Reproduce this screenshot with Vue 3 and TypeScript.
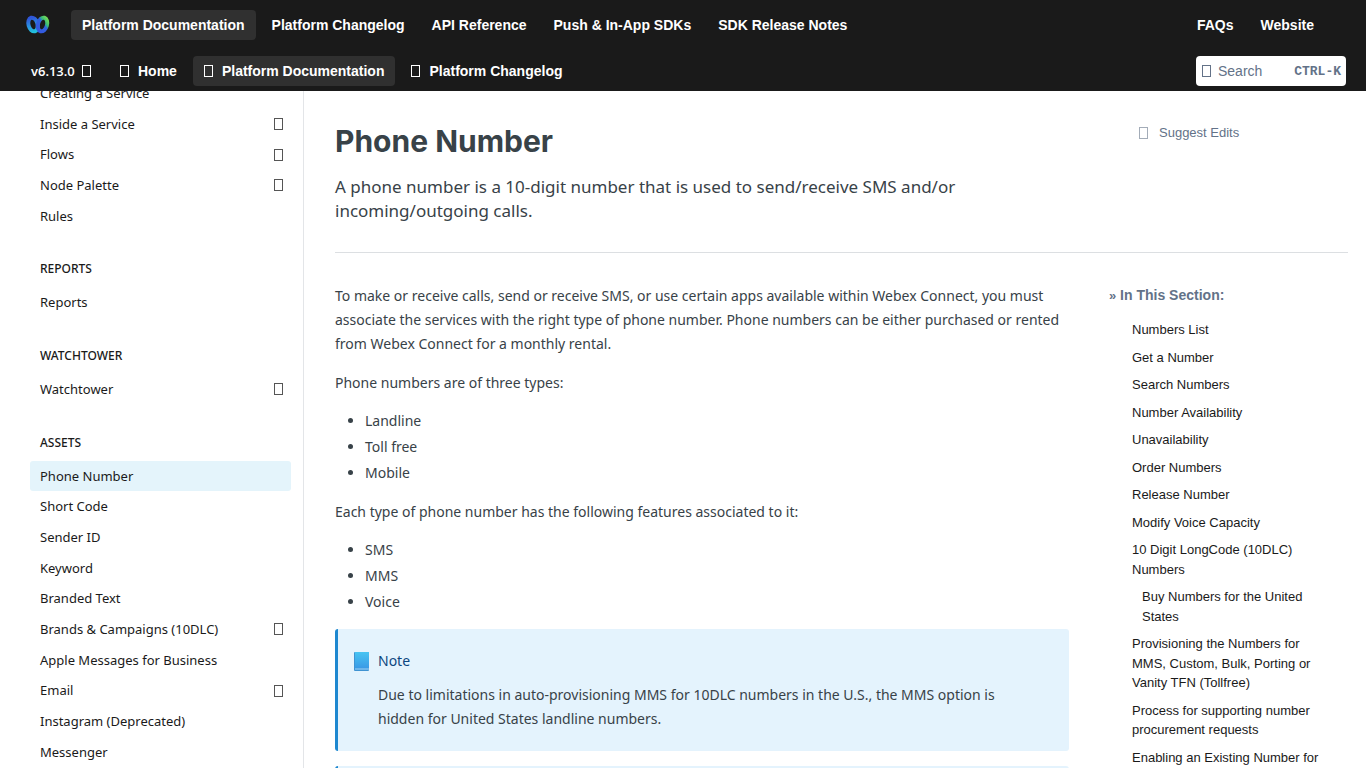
<script setup lang="ts">
interface NavItem { label: string; active?: boolean }
interface SideItem { label: string; expandable?: boolean; active?: boolean }
interface SideGroup { title?: string; items: SideItem[] }
interface TocItem { label: string; nested?: boolean }

const primaryNav: NavItem[] = [
  { label: 'Platform Documentation', active: true },
  { label: 'Platform Changelog' },
  { label: 'API Reference' },
  { label: 'Push & In-App SDKs' },
  { label: 'SDK Release Notes' },
]
const externalNav: NavItem[] = [{ label: 'FAQs' }, { label: 'Website' }]
const secondaryNav: NavItem[] = [
  { label: 'Home' },
  { label: 'Platform Documentation', active: true },
  { label: 'Platform Changelog' },
]

const groups: SideGroup[] = [
  {
    items: [
      { label: 'Creating a Service' },
      { label: 'Inside a Service', expandable: true },
      { label: 'Flows', expandable: true },
      { label: 'Node Palette', expandable: true },
      { label: 'Rules' },
    ],
  },
  { title: 'REPORTS', items: [{ label: 'Reports' }] },
  { title: 'WATCHTOWER', items: [{ label: 'Watchtower', expandable: true }] },
  {
    title: 'ASSETS',
    items: [
      { label: 'Phone Number', active: true },
      { label: 'Short Code' },
      { label: 'Sender ID' },
      { label: 'Keyword' },
      { label: 'Branded Text' },
      { label: 'Brands & Campaigns (10DLC)', expandable: true },
      { label: 'Apple Messages for Business' },
      { label: 'Email', expandable: true },
      { label: 'Instagram (Deprecated)' },
      { label: 'Messenger' },
    ],
  },
]

const toc: TocItem[] = [
  { label: 'Numbers List' },
  { label: 'Get a Number' },
  { label: 'Search Numbers' },
  { label: 'Number Availability' },
  { label: 'Unavailability' },
  { label: 'Order Numbers' },
  { label: 'Release Number' },
  { label: 'Modify Voice Capacity' },
  { label: '10 Digit LongCode (10DLC) Numbers' },
  { label: 'Buy Numbers for the United States', nested: true },
  { label: 'Provisioning the Numbers for MMS, Custom, Bulk, Porting or Vanity TFN (Tollfree)' },
  { label: 'Process for supporting number procurement requests' },
  { label: 'Enabling an Existing Number for' },
]

const types: string[] = ['Landline', 'Toll free', 'Mobile']
const features: string[] = ['SMS', 'MMS', 'Voice']
</script>

<template>
  <div class="page">
    <header class="header">
      <div class="bar bar-top">
        <a href="#" class="logo" aria-label="Webex Connect">
          <svg width="26" height="20" viewBox="0 0 26 20" fill="none" stroke-width="4">
            <defs>
              <linearGradient id="loopLeft" x1="0.3" y1="0" x2="0.3" y2="1">
                <stop offset="0" stop-color="#2f55d8" />
                <stop offset="0.5" stop-color="#2b8be0" />
                <stop offset="1" stop-color="#22bfdc" />
              </linearGradient>
              <linearGradient id="loopRight" x1="0.8" y1="0" x2="0.3" y2="1">
                <stop offset="0" stop-color="#6fd85a" />
                <stop offset="0.3" stop-color="#35b77c" />
                <stop offset="0.45" stop-color="#2f62e0" />
                <stop offset="1" stop-color="#3558e0" />
              </linearGradient>
            </defs>
            <ellipse cx="8" cy="9.500" rx="4.500" ry="7" transform="rotate(-16 8 9.5)" stroke="url(#loopLeft)" />
            <ellipse cx="17.500" cy="9.500" rx="4.500" ry="7" transform="rotate(16 17.5 9.5)" stroke="url(#loopRight)" />
          </svg>
        </a>
        <nav class="nav">
          <a v-for="n in primaryNav" :key="n.label" href="#" class="nav-link" :class="{ active: n.active }">{{ n.label }}</a>
        </nav>
        <nav class="nav nav-right">
          <a v-for="n in externalNav" :key="n.label" href="#" class="nav-link">{{ n.label }}</a>
        </nav>
      </div>
      <div class="bar bar-sub">
        <button type="button" class="version">v6.13.0 <i class="glyph"></i></button>
        <nav class="nav">
          <a v-for="n in secondaryNav" :key="n.label" href="#" class="nav-link with-glyph" :class="{ active: n.active }"><i class="glyph"></i>{{ n.label }}</a>
        </nav>
        <button type="button" class="search">
          <i class="glyph"></i><span>Search</span><kbd>CTRL-K</kbd>
        </button>
      </div>
    </header>

    <div class="body">
      <aside class="sidebar">
        <section v-for="(g, i) in groups" :key="i" class="group">
          <h2 v-if="g.title">{{ g.title }}</h2>
          <ul>
            <li v-for="s in g.items" :key="s.label">
              <a href="#" :class="{ active: s.active }">{{ s.label }}<i v-if="s.expandable" class="glyph"></i></a>
            </li>
          </ul>
        </section>
      </aside>

      <main class="main">
        <div class="intro">
          <div>
            <h1>Phone Number</h1>
            <p class="excerpt">A phone number is a 10-digit number that is used to send/receive SMS and/or incoming/outgoing calls.</p>
          </div>
          <div><a href="#" class="suggest"><i class="glyph"></i>Suggest Edits</a></div>
        </div>

        <div class="columns">
          <article class="article">
            <p>To make or receive calls, send or receive SMS, or use certain apps available within Webex Connect, you must associate the services with the right type of phone number. Phone numbers can be either purchased or rented from Webex Connect for a monthly rental.</p>
            <p>Phone numbers are of three types:</p>
            <ul><li v-for="t in types" :key="t">{{ t }}</li></ul>
            <p>Each type of phone number has the following features associated to it:</p>
            <ul><li v-for="f in features" :key="f">{{ f }}</li></ul>
            <blockquote class="callout">
              <h3>
                <svg class="book" width="16" height="20" viewBox="0 0 16 20">
                  <defs>
                    <linearGradient id="cover" x1="0" y1="0" x2="0" y2="1">
                      <stop offset="0" stop-color="#47c4f2" />
                      <stop offset="1" stop-color="#3a9be6" />
                    </linearGradient>
                  </defs>
                  <rect x="0" y="1" width="15" height="19" rx="1" fill="#3f93d2" />
                  <rect x="1" y="17" width="14" height="2" fill="#6fb6ea" />
                  <rect x="1" y="1" width="14" height="16" fill="url(#cover)" />
                </svg>
                Note
              </h3>
              <p>Due to limitations in auto-provisioning MMS for 10DLC numbers in the U.S., the MMS option is hidden for United States landline numbers.</p>
            </blockquote>
            <blockquote class="callout"></blockquote>
          </article>

          <nav class="toc" aria-labelledby="toc-title">
            <h2 id="toc-title"><span>»</span> In This Section:</h2>
            <ul>
              <li v-for="t in toc" :key="t.label" :class="{ nested: t.nested }"><a href="#">{{ t.label }}</a></li>
            </ul>
          </nav>
        </div>
      </main>
    </div>
  </div>
</template>

<style>
body { margin: 0; }
</style>

<style scoped>
* { box-sizing: border-box; }
.page {
  height: 100vh;
  overflow: hidden;
  display: flex;
  flex-direction: column;
  background: #fff;
  font-family: "Noto Sans", "Open Sans", sans-serif;
  color: #384248;
}
a { color: inherit; text-decoration: none; }
ul { margin: 0; padding: 0; list-style: none; }
button { border: 0; margin: 0; cursor: pointer; }
.glyph {
  display: inline-block;
  flex: none;
  width: 9px;
  height: 12px;
  border: 1px solid currentColor;
}

.header { position: relative; z-index: 1; flex: none; background: #1a1a1a; color: #fff; }
.bar { display: flex; align-items: center; }
.bar-top { height: 50px; padding: 0 41px 0 25px; }
.bar-sub { height: 41px; padding: 0 20px 5px 31px; align-items: flex-end; }
.logo { display: flex; width: 46px; }
.nav { display: flex; gap: 5px; }
.nav-right { margin-left: auto; }
.nav-link {
  display: flex;
  align-items: center;
  height: 30px;
  padding: 0 11px;
  border-radius: 4px;
  font: bold 14px "Liberation Sans", Arial, sans-serif;
}
.with-glyph { gap: 9px; }
.active.nav-link { background: #303030; }
.version {
  display: flex;
  align-items: center;
  gap: 7px;
  width: 78px;
  height: 30px;
  padding: 0;
  background: none;
  color: #fff;
  font: 600 13px "Open Sans", sans-serif;
}
.search {
  display: flex;
  align-items: center;
  gap: 7px;
  width: 150px;
  height: 30px;
  margin-left: auto;
  padding: 0 5px 0 6px;
  border-radius: 4px;
  background: #fff;
  color: #637288;
  font: 14px "Liberation Sans", Arial, sans-serif;
}
.search kbd { margin-left: auto; font: bold 13px "Liberation Mono", monospace; }

.body { flex: 1; min-height: 0; display: flex; }
.sidebar {
  flex: none;
  width: 304px;
  padding: 0 12px 0 30px;
  border-right: 1px solid #e3e5e8;
  color: #1a1a1a;
}
.group:first-child { margin-top: -13px; }
.sidebar h2 { margin: 29px 0 9px 10px; font-size: 12px; font-weight: 500; line-height: 18px; }
.sidebar a {
  display: flex;
  align-items: center;
  justify-content: space-between;
  padding: 5px 8px 5px 10px;
  border-radius: 3px;
  font-size: 13px;
  line-height: 1.59;
}
.sidebar a.active { background: #e4f4fb; }
.sidebar .glyph { border-color: #555; }

.main { flex: 1; min-width: 0; padding: 0 18px 0 31px; }
.intro, .columns { display: grid; grid-template-columns: 1fr 239px; column-gap: 40px; }
.intro { padding: 30px 0 29px; border-bottom: 1px solid #dcdfe2; }
h1 { margin: 0 0 14px; font: bold 30px/40px "Inter", sans-serif; }
.excerpt { margin: 0; font-size: 17px; line-height: 24px; }
.suggest {
  display: flex;
  align-items: center;
  gap: 11px;
  padding-left: 30px;
  color: #637288;
  font: 13px/24px "Liberation Sans", Arial, sans-serif;
}
.suggest .glyph { border-color: #a3acb8; }
.columns { padding-top: 30px; }
.article { padding-top: 1px; font-size: 14px; line-height: 24px; }
.article p { margin: 0 0 14px; }
.article p + p { margin-top: 15px; }
.article ul { margin-bottom: 15px; padding-left: 30px; list-style: disc; }
.article li + li { margin-top: 2px; }
.callout {
  margin: 0 0 15px;
  padding: 20px 40px;
  border-left: 3px solid #1e88d0;
  border-radius: 3px;
  background: #e4f3fd;
}
.callout h3 {
  display: flex;
  align-items: center;
  gap: 8px;
  margin: 0 0 10px;
  color: #0d4680;
  font-size: 14px;
  font-weight: 400;
  line-height: 24px;
}
.book { margin-left: -24px; }
.article .callout p { margin: 0; }

.toc { padding-right: 24px; font-family: "Liberation Sans", Arial, sans-serif; }
.toc h2 { margin: 0 0 12px; color: #637288; font-size: 14px; line-height: 24px; }
.toc h2 span { font-size: 13px; }
.toc ul { padding-left: 23px; }
.toc li { margin-bottom: 8px; color: #1a1a1a; font-size: 13px; line-height: 1.5; }
.toc .nested { padding-left: 10px; }
</style>
